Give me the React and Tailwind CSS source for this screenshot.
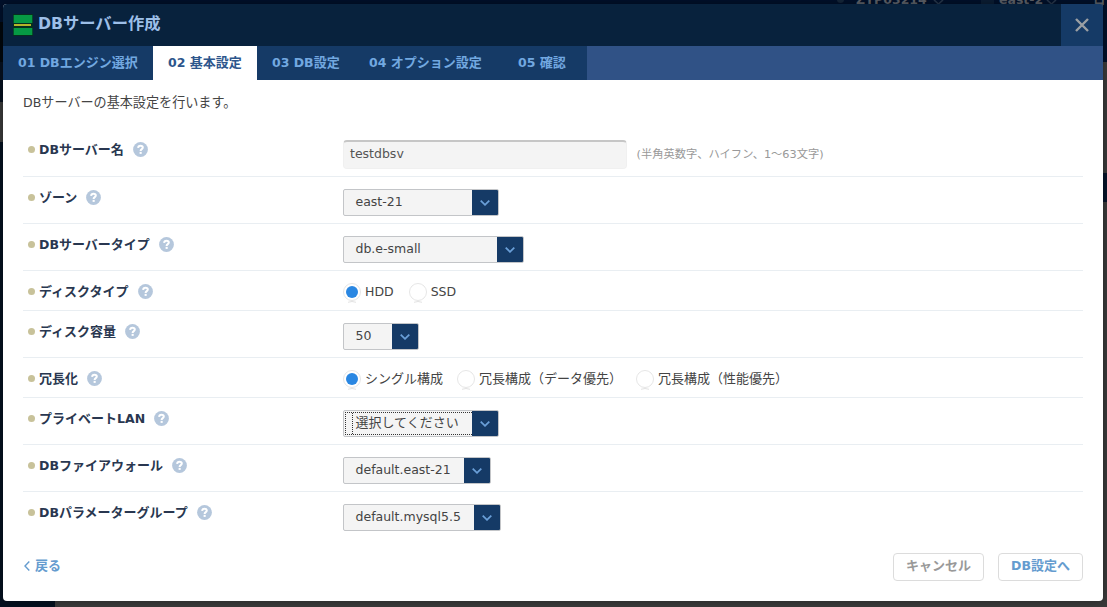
import React from "react";

// Latin runs are set slightly smaller than the Japanese glyphs around them.
function T({ children }) {
  const runs = children.match(/[\x20-\x7e]+|[^\x20-\x7e]+/g) || [];
  return runs.map((run, i) => (
    <span key={i} className={/^[\x20-\x7e]/.test(run) ? "text-[0.962em]" : undefined}>
      {run}
    </span>
  ));
}

function Help() {
  return (
    <svg className="ml-[9px] size-[15px] shrink-0" viewBox="0 0 15 15" aria-hidden="true">
      <circle cx="7.5" cy="7.5" r="7.4" fill="#b5c7dc" />
      <path d="M5.1 5.9C5.2 4.5 6.1 3.8 7.5 3.8C8.9 3.8 9.8 4.5 9.8 5.6C9.8 7.2 7.6 7.1 7.6 9" fill="none" stroke="#fff" strokeWidth="2" />
      <rect x="6.6" y="9.9" width="2.1" height="2" fill="#fff" />
    </svg>
  );
}

function Row({ label, first, short, last, children }) {
  return (
    <div className={`flex ${first ? "h-12" : short ? "h-10" : "h-[47px]"} ${last ? "" : "border-b border-[#e9eef2]"}`}>
      <div className="flex h-[41px] w-80 shrink-0 items-center pl-[4.5px]">
        <span className="mr-[4.5px] size-[7px] shrink-0 rounded-full bg-[#c8c29a]" />
        <span className="whitespace-nowrap text-[13px] font-bold leading-5 text-[#293750]">
          <T>{label}</T>
        </span>
        <Help />
      </div>
      {children}
    </div>
  );
}

function Select({ width, value, focused }) {
  return (
    <div className={`mt-3 flex h-[27px] ${width} overflow-hidden rounded-[2px] border border-[#c3c5c8] bg-[#f4f4f4]`}>
      <div className={`flex min-w-0 flex-1 ${focused ? "my-px ml-px border-y border-l border-dotted border-[#333]" : "py-[2px] pl-[2px]"}`}>
        <div className={`flex-1 whitespace-nowrap text-[13px] leading-5 text-[#444] ${focused ? "ml-[6px] border-l border-dotted border-[#333] pl-[2.5px]" : "pl-[9.5px]"}`}>
          <T>{value}</T>
        </div>
      </div>
      <div className="flex w-[26px] shrink-0 items-center justify-center bg-[#153a66]">
        <svg className="mt-px" width="10" height="6" viewBox="0 0 10 6" fill="none" stroke="#6a9fd8" strokeWidth="1.8">
          <path d="M0.7 0.7L5 4.8L9.3 0.7" />
        </svg>
      </div>
    </div>
  );
}

function Radio({ label, checked }) {
  return (
    <label className="flex items-center whitespace-nowrap">
      <svg width="18" height="20" viewBox="0 0 18 20" className="mt-[4px]">
        <circle cx="9" cy="9" r="8.5" fill="#fff" stroke="#e6e6e6" />
        <path d="M5 19.3Q9 17.7 13 19.3" fill="none" stroke="#e2e2e2" />
        {checked && <circle cx="9" cy="9" r="6" fill="#2a87e2" />}
      </svg>
      <span className="ml-[4px] pt-[2px] text-[13px] leading-5 text-[#444]">
        <T>{label}</T>
      </span>
    </label>
  );
}

function Tab({ className, children }) {
  return (
    <div className={`pl-[15px] text-[13px] font-bold leading-[34px] whitespace-nowrap ${className}`}>
      <T>{children}</T>
    </div>
  );
}

function BackdropText({ className, children }) {
  return (
    <div className={`absolute top-[-8px] text-[12.5px] font-bold leading-[16px] text-[#5c6068] ${className}`}>{children}</div>
  );
}

export default function App() {
  return (
    <div className="relative h-[607px] w-[1107px] overflow-hidden bg-[#3a3a3a] px-[3px] pb-[6px] pt-[4px] font-['DejaVu_Sans','Noto_Sans_CJK_JP',sans-serif]">
      <div className="absolute left-0 top-0 h-[62px] w-full bg-[#00102a]" />
      <div className="absolute left-0 top-[22px] h-[40px] w-[4px] bg-[#02070c]" />
      <div className="absolute left-0 top-[62px] h-[40px] w-[4px] bg-[#06101f]" />
      <div className="absolute bottom-0 left-0 h-[465px] w-[55px] bg-[#04101f]" />
      <div className="absolute right-0 top-[173px] h-[29px] w-[5px] bg-[#06142a]" />
      <div className="absolute left-[837px] top-[-4px] size-[7px] rounded-full bg-[#15263a]" />
      <BackdropText className="left-[856px]">ZYP03214</BackdropText>
      <svg className="absolute left-[933px] top-0" width="11" height="5" viewBox="0 0 11 5" fill="none" stroke="#26364a" strokeWidth="1.6">
        <path d="M1 0L5.5 4L10 0" />
      </svg>
      <div className="absolute left-[981px] top-0 h-1 w-[13px] bg-[#0b1d33]" />
      <BackdropText className="left-[999px]">east-2</BackdropText>
      <svg className="absolute left-[1046px] top-0" width="11" height="5" viewBox="0 0 11 5" fill="none" stroke="#26364a" strokeWidth="1.6">
        <path d="M1 0L5.5 4L10 0" />
      </svg>
      <BackdropText className="left-[1093px]">日</BackdropText>

      <div className="relative flex h-[597px] w-[1100px] flex-col overflow-hidden rounded-[4px] bg-white shadow-[0_0_8px_rgba(0,0,0,0.35)]">
        <header className="flex h-[42px] shrink-0 bg-[#08223d]">
          <svg className="ml-[10px] mt-[10px]" width="20" height="22" viewBox="0 0 20 22">
            <rect width="20" height="22" fill="#06301f" />
            <rect x="0.7" y="1" width="18.6" height="8" fill="#069a44" />
            <rect x="1" y="10" width="17" height="2" fill="#b5b52a" />
            <rect x="0.7" y="14" width="18.6" height="7" fill="#069a44" />
          </svg>
          <h1 className="ml-[5px] text-[16.3px] font-bold leading-[40px] text-[#9dbfe8]">
            <T>DBサーバー作成</T>
          </h1>
          <button className="ml-auto flex w-[42px] items-center justify-center bg-[#153a66]" aria-label="閉じる">
            <svg width="14" height="14" viewBox="0 0 14 14" stroke="#9b9fa3" strokeWidth="2.4">
              <path d="M1 1L13 13M13 1L1 13" />
            </svg>
          </button>
        </header>
        <nav className="flex h-[34px] shrink-0 bg-[#305286] text-[#72a8e0]">
          <Tab className="w-[150px] bg-[#153a66]">01 DBエンジン選択</Tab>
          <Tab className="w-[104px] bg-white text-[#2d568c]">02 基本設定</Tab>
          <Tab className="w-[97px] bg-[#153a66]">03 DB設定</Tab>
          <Tab className="w-[149px] bg-[#153a66]">04 オプション設定</Tab>
          <Tab className="w-[84px] bg-[#153a66]">05 確認</Tab>
        </nav>
        <main className="flex flex-1 flex-col px-5">
          <p className="h-[49px] pt-[13px] text-[13.1px] leading-5 text-[#444]">
            <T>DBサーバーの基本設定を行います。</T>
          </p>
          <Row label="DBサーバー名" first>
            <div className="mt-[11px] h-[29px] w-[284px] rounded-[4px] border border-t-2 border-[#f0f0f0] border-t-[#c6c6c6] bg-[#f4f4f4] pl-[6px] text-[13px] leading-[24px] text-[#555]">
              <T>testdbsv</T>
            </div>
            <span className="ml-[9.5px] mt-[16px] text-[11.25px] leading-5 text-[#999]">(半角英数字、ハイフン、1～63文字)</span>
          </Row>
          <Row label="ゾーン"><Select width="w-[156px]" value="east-21" /></Row>
          <Row label="DBサーバータイプ"><Select width="w-[181px]" value="db.e-small" /></Row>
          <Row label="ディスクタイプ" short>
            <div className="flex gap-[15px]"><Radio label="HDD" checked /><Radio label="SSD" /></div>
          </Row>
          <Row label="ディスク容量"><Select width="w-[76px]" value="50" /></Row>
          <Row label="冗長化" short>
            <div className="flex gap-[14px]">
              <Radio label="シングル構成" checked />
              <Radio label="冗長構成（データ優先）" />
              <Radio label="冗長構成（性能優先）" />
            </div>
          </Row>
          <Row label="プライベートLAN"><Select width="w-[156px]" value="選択してください" focused /></Row>
          <Row label="DBファイアウォール"><Select width="w-[148px]" value="default.east-21" /></Row>
          <Row label="DBパラメーターグループ" last><Select width="w-[158px]" value="default.mysql5.5" /></Row>
          <footer className="mt-[14px] flex h-7 text-[13px] font-bold">
            <a className="flex h-[26px] items-center text-[#659ccf]">
              <svg className="ml-px mr-[5px]" width="6" height="10" viewBox="0 0 6 10" fill="none" stroke="#659ccf" strokeWidth="1.4">
                <path d="M5.3 0.6L1 5L5.3 9.4" />
              </svg>
              戻る
            </a>
            <button className="ml-auto w-[91px] rounded-[4px] border border-[#dcdcdc] pb-[2px] leading-6 text-[#999]">キャンセル</button>
            <button className="ml-[14px] w-[85px] rounded-[4px] border border-[#dcdcdc] pb-[2px] leading-6 text-[#659ccf]">
              <T>DB設定へ</T>
            </button>
          </footer>
        </main>
      </div>
    </div>
  );
}
